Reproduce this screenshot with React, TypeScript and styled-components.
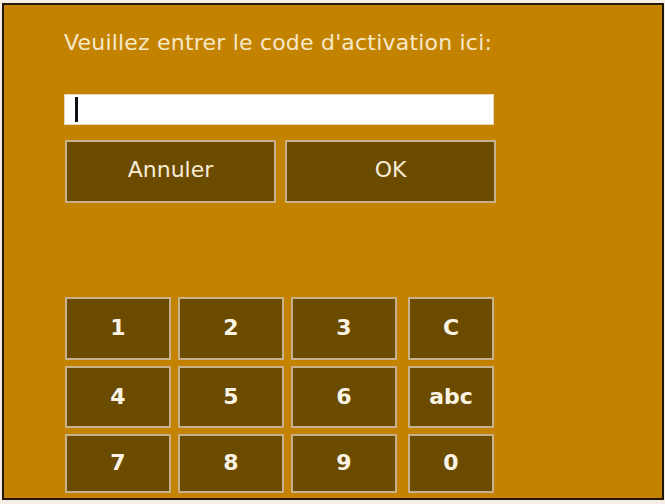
import React from 'react'
import styled, { createGlobalStyle } from 'styled-components'

const GlobalStyle = createGlobalStyle`
  html, body {
    margin: 0;
    padding: 0;
    background: #f4eee4;
  }
  body {
    font-family: 'DejaVu Sans', 'Liberation Sans', sans-serif;
  }
`

const Frame = styled.div`
  box-sizing: border-box;
  margin: 3px 0 0 2px;
  width: 662px;
  height: 497px;
  border: 2px solid #241600;
  background: #c38300;
  padding: 25px 0 5px 60px;
  display: flex;
  flex-direction: column;
`

const Prompt = styled.div`
  color: #f6e8c8;
  font-size: 22px;
  line-height: 26px;
  height: 26px;
  letter-spacing: 0.2px;
  white-space: nowrap;
`

const Field = styled.div`
  box-sizing: border-box;
  margin-top: 38px;
  width: 430px;
  height: 31px;
  background: #ffffff;
  border: 1px solid #e8d8b8;
  display: flex;
  align-items: center;
  padding-left: 10px;
`

const Caret = styled.span`
  display: block;
  width: 3px;
  height: 25px;
  background: #101010;
`

const ActionRow = styled.div`
  display: flex;
  gap: 9px;
  margin-top: 15px;
  margin-left: 1px;
`

const ActionButton = styled.button`
  box-sizing: border-box;
  width: 211px;
  height: 63px;
  background: #6b4b00;
  border: 2px solid #c8b08c;
  color: #f6ecd6;
  font-family: 'DejaVu Sans', 'Liberation Sans', sans-serif;
  font-size: 22px;
  padding: 0 0 4px;
  cursor: pointer;
`

const Keypad = styled.div`
  margin-top: auto;
  margin-left: 1px;
  display: grid;
  grid-template-columns: 106px 106px 106px 90px;
  grid-template-rows: 63px 62px 59px;
  column-gap: 7px;
  row-gap: 6px;
`

const Key = styled.button<{ $side?: boolean }>`
  box-sizing: border-box;
  margin-left: ${({ $side }) => ($side ? '4px' : '0')};
  background: #6b4b00;
  border: 2px solid #c8b08c;
  color: #fbf4e4;
  font-family: 'DejaVu Sans', 'Liberation Sans', sans-serif;
  font-weight: bold;
  font-size: 22px;
  padding: 0 0 2px;
  cursor: pointer;
`

const keys = ['1', '2', '3', 'C', '4', '5', '6', 'abc', '7', '8', '9', '0']

export default function App() {
  return (
    <>
      <GlobalStyle />
      <Frame>
        <Prompt>Veuillez entrer le code d'activation ici:</Prompt>
        <Field>
          <Caret />
        </Field>
        <ActionRow>
          <ActionButton>Annuler</ActionButton>
          <ActionButton>OK</ActionButton>
        </ActionRow>
        <Keypad>
          {keys.map((k, i) => (
            <Key key={k} $side={i % 4 === 3}>
              {k}
            </Key>
          ))}
        </Keypad>
      </Frame>
    </>
  )
}
